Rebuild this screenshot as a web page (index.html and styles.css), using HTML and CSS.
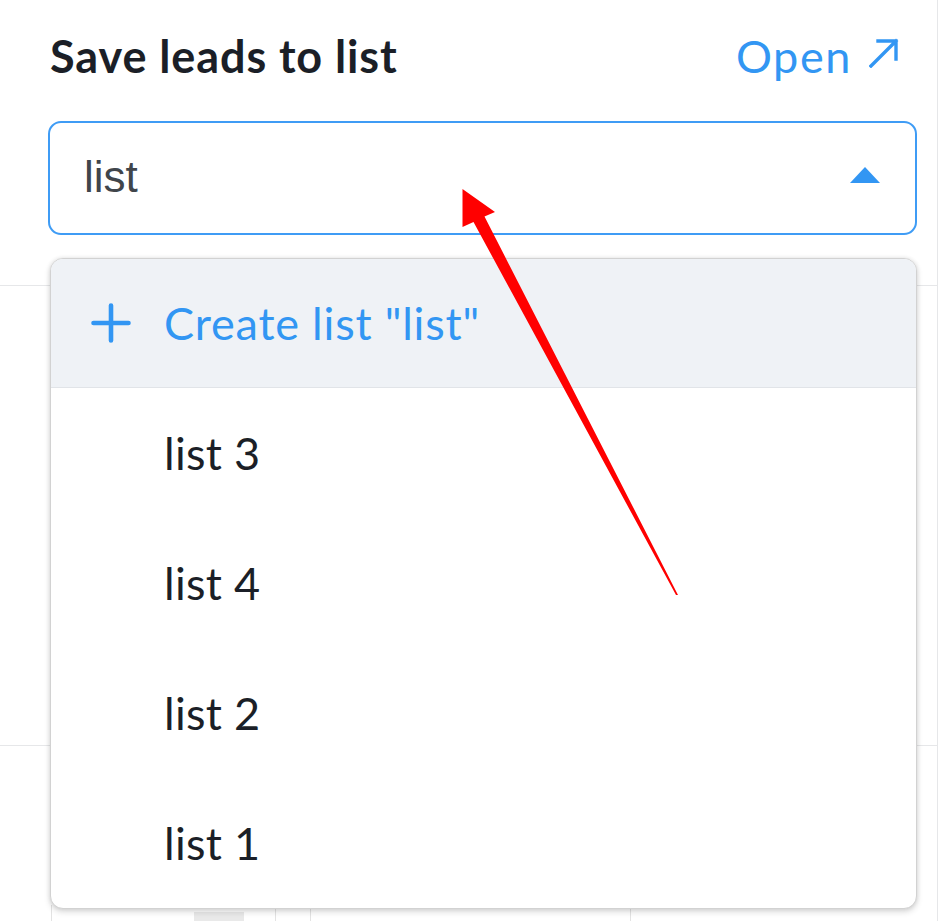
FILE: index.html
```html
<!DOCTYPE html>
<html lang="en">
<head>
<meta charset="utf-8">
<title>Save leads to list</title>
<link rel="stylesheet" href="styles.css">
</head>
<body>
<div class="page">
  <div class="panel">
    <header class="head">
      <h1 class="title">Save leads to list</h1>
      <a class="open" href="#">Open
        <svg class="open-icon" viewBox="0 0 30 30" width="30" height="30"><path d="M2 28 L27 3 M9 3 H27 V21" fill="none" stroke="currentColor" stroke-width="3.4" stroke-linecap="square"/></svg>
      </a>
    </header>
    <div class="field">
      <div class="input">
        <span class="input-text">list</span>
        <svg class="caret" viewBox="0 0 30 16" width="30" height="16"><path d="M15 0 L30 16 H0 Z" fill="currentColor"/></svg>
      </div>
      <ul class="menu">
        <li class="item create">
          <svg class="plus" viewBox="0 0 40 40" width="40" height="40"><path d="M20 2.5 V37.5 M2.5 20 H37.5" fill="none" stroke="currentColor" stroke-width="4.6" stroke-linecap="round"/></svg>
          <span>Create list "list"</span>
        </li>
        <li class="item">list 3</li>
        <li class="item">list 4</li>
        <li class="item">list 2</li>
        <li class="item">list 1</li>
      </ul>
    </div>
  </div>
  <div class="table">
    <div class="trow r1"></div>
    <div class="trow r2"></div>
    <div class="trow r3">
      <div class="cell c0"></div>
      <div class="cell c1"><span class="chip"></span></div>
      <div class="cell c2"></div>
      <div class="cell c3"></div>
      <div class="cell c4"></div>
    </div>
  </div>
  <svg class="annot" viewBox="0 0 938 921" width="938" height="921">
    <polygon points="462.5,189 462.5,227 473.5,222 676,595 678,595 484.5,216.5 495,212" fill="#ff0000"/>
  </svg>
</div>
</body>
</html>
```

FILE: styles.css
```css
* { box-sizing: border-box; }
html, body { margin: 0; padding: 0; background: #ffffff; }
body { width: 938px; height: 921px; overflow: hidden; font-family: Lato, "Open Sans", sans-serif; }

.page {
  position: relative;
  width: 938px;
  height: 921px;
  border-right: 1px solid #e6e7e9;
  overflow: hidden;
}

.panel { padding: 0 20px 0 48px; }

.head {
  height: 121px;
  display: flex;
  align-items: flex-start;
  justify-content: space-between;
  padding: 28px 18px 0 2px;
}
.title {
  margin: 0;
  font-family: Lato, sans-serif;
  font-weight: 700;
  font-size: 45px;
  letter-spacing: 0.9px;
  line-height: 56px;
  color: #1b1f27;
}
.open {
  display: flex;
  align-items: center;
  gap: 17px;
  font-family: Lato, sans-serif;
  font-size: 45px;
  letter-spacing: 1.6px;
  line-height: 56px;
  color: #3296f3;
  text-decoration: none;
}
.open-icon { color: #3296f3; margin-top: -6px; }

.field { position: relative; }
.input {
  height: 114px;
  border: 2px solid #3f9cf5;
  border-radius: 13px;
  display: flex;
  align-items: center;
  justify-content: space-between;
  padding: 0 35px 0 34px;
  background: #fff;
}
.input-text {
  font-family: "Liberation Sans", Arial, sans-serif;
  font-size: 44px;
  color: #40454b;
  margin-top: -2px;
}
.caret { color: #3296f3; margin-top: -6px; }

.menu {
  position: absolute;
  z-index: 2;
  top: 137px;
  left: 2px;
  width: 867px;
  margin: 0;
  padding: 0;
  list-style: none;
  background: #fff;
  border: 1px solid #d2d2d2;
  border-radius: 13px;
  box-shadow: 0 3px 6px rgba(0,0,0,0.14), 0 0 4px rgba(0,0,0,0.10);
  overflow: hidden;
}
.item {
  height: 130px;
  display: flex;
  align-items: center;
  padding-left: 113px;
  font-size: 45px;
  letter-spacing: 0.3px;
  color: #1b1f27;
}
.item.create {
  height: 129px;
  background: #eff2f6;
  border-bottom: 1px solid #e1e4e8;
  color: #3296f3;
  padding-left: 40px;
  gap: 33px;
  letter-spacing: 0.8px;
}
.plus { color: #3296f3; flex: none; }

.table { position: relative; z-index: 1; }
.trow { border-bottom: 1px solid #e6e7e9; }
.r1 { height: 51px; }
.r2 { height: 460px; }
.r3 { border-bottom: 0; height: 200px; margin-top: 159px; display: flex; }
.cell { border-left: 1px solid #e3e3e3; height: 100%; }
.c0 { width: 51px; border-left: 0; }
.c1 { width: 224px; position: relative; }
.chip { position: absolute; left: 142px; top: 7px; width: 50px; height: 10px; background: #e9e9e9; }
.c2 { width: 35px; }
.c3 { width: 320px; }
.c4 { flex: 1; }

.annot { position: absolute; left: 0; top: 0; z-index: 5; pointer-events: none; }
```
